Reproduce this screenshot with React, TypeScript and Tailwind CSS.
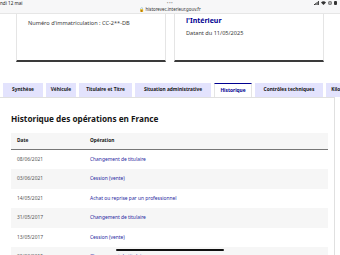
import React from "react";

const rows = [
  { date: "08/06/2021", op: "Changement de titulaire" },
  { date: "03/06/2021", op: "Cession (vente)" },
  { date: "14/05/2021", op: "Achat ou reprise par un professionnel" },
  { date: "31/05/2017", op: "Changement de titulaire" },
  { date: "13/05/2017", op: "Cession (vente)" },
  { date: "20/03/2015", op: "Changement de titulaire" },
];

const tabs = [
  { label: "Synthèse", w: "w-[40px]" },
  { label: "Véhicule", w: "w-[30px]" },
  { label: "Titulaire et Titre", w: "w-[53px]" },
  { label: "Situation administrative", w: "w-[76px]" },
  { label: "Historique", w: "w-[38px]", active: true },
  { label: "Contrôles techniques", w: "w-[68px]" },
  { label: "Kilométrage", w: "w-[40px]" },
];

function StatusIcons() {
  return (
    <div className="flex items-center gap-[2px] pr-[3px]">
      <svg width="5" height="4" viewBox="0 0 5 4">
        <rect x="0" y="3" width="1" height="1" fill="#333" />
        <rect x="1.3" y="2" width="1" height="2" fill="#333" />
        <rect x="2.6" y="1" width="1" height="3" fill="#333" />
        <rect x="3.9" y="0" width="1" height="4" fill="#333" />
      </svg>
      <svg width="5" height="4" viewBox="0 0 10 8">
        <path d="M5 8 L0 3 A7 7 0 0 1 10 3 Z" fill="#333" />
      </svg>
      <svg width="4" height="4" viewBox="0 0 8 8">
        <circle cx="4" cy="4" r="3.5" fill="none" stroke="#333" strokeWidth="1.2" />
        <circle cx="4" cy="4" r="1.5" fill="#333" />
      </svg>
      <div className="w-[3px] h-[4px] bg-[#333] rounded-[1px]" />
    </div>
  );
}

export default function App() {
  return (
    <div className="relative w-[340px] h-[255px] overflow-hidden bg-white font-['Noto_Sans',sans-serif] text-[#161616]">
      {/* status bar */}
      <div className="h-[14px] bg-[#f7f7f8] border-b border-[#e6e6e6] flex flex-col">
        <div className="h-[7px] flex items-center justify-between text-[4.6px] leading-none text-[#222]">
          <span className="w-[40px]">ndi 12 mai</span>
          <span className="text-[#999] tracking-[0.5px]">•••</span>
          <div className="w-[40px] flex justify-end">
            <StatusIcons />
          </div>
        </div>
        <div className="h-[7px] flex items-start justify-center text-[4.4px] leading-none text-[#333]">
          <span>🔒 historevec.interieur.gouv.fr</span>
        </div>
      </div>

      {/* cards */}
      <div className="flex gap-[8px] pl-[16px]">
        <div className="w-[150px] h-[48px] border-x border-[#e5e5e5] border-b-2 border-b-[#3a3a3a] px-[11px] pt-[6px]">
          <p className="text-[5.6px] leading-[7px] text-[#3a3a3a] whitespace-nowrap">
            Numéro d'immatriculation : CC-2**-DB
          </p>
        </div>
        <div className="w-[150px] h-[48px] border-x border-[#e5e5e5] border-b-2 border-b-[#3a3a3a] px-[11px] pt-[2px]">
          <p className="text-[7px] leading-[9px] font-bold text-[#000091]">l'Intérieur</p>
          <p className="mt-[5px] text-[5.6px] leading-[7px] text-[#3a3a3a] whitespace-nowrap">
            Datant du 11/05/2025
          </p>
        </div>
      </div>

      {/* tabs */}
      <div className="mt-[21px] flex gap-[3px] pl-[3px] whitespace-nowrap">
        {tabs.map((t) => (
          <div
            key={t.label}
            className={
              "shrink-0 h-[14px] flex items-center justify-center text-[4.8px] font-bold " +
              t.w +
              (t.active
                ? " bg-white text-[#000091] border-t-[1.5px] border-[#000091] border-x border-x-[#e5e5e5]"
                : " bg-[#e3e3fd] text-[#161616]")
            }
          >
            {t.label}
          </div>
        ))}
      </div>

      {/* panel */}
      <div className="w-[335px] border-t border-r border-[#e0e0e0] pl-[11px] pr-[6px] h-[200px]">
        <h2 className="mt-[15px] text-[8.2px] leading-[12px] font-bold text-[#161616]">
          Historique des opérations en France
        </h2>
        <div className="mt-[8px] w-[317px]">
          <div className="h-[17px] bg-[#f6f6f6] border-b border-[#777] flex items-center text-[4.8px] font-bold">
            <span className="w-[79px] pl-[6px]">Date</span>
            <span>Opération</span>
          </div>
          {rows.map((r, i) => (
            <div
              key={i}
              className={
                "h-[19.4px] flex items-center text-[4.9px] " + (i % 2 === 1 ? "bg-[#f6f6f6]" : "bg-white")
              }
            >
              <span className="w-[79px] pl-[6px] text-[#555]">{r.date}</span>
              <span className="text-[#1f1f9e] whitespace-nowrap">{r.op}</span>
            </div>
          ))}
        </div>
      </div>

      {/* home indicator */}
      <div className="absolute left-[116px] top-[249px] w-[108px] h-[2px] rounded-full bg-[#111]" />
    </div>
  );
}
